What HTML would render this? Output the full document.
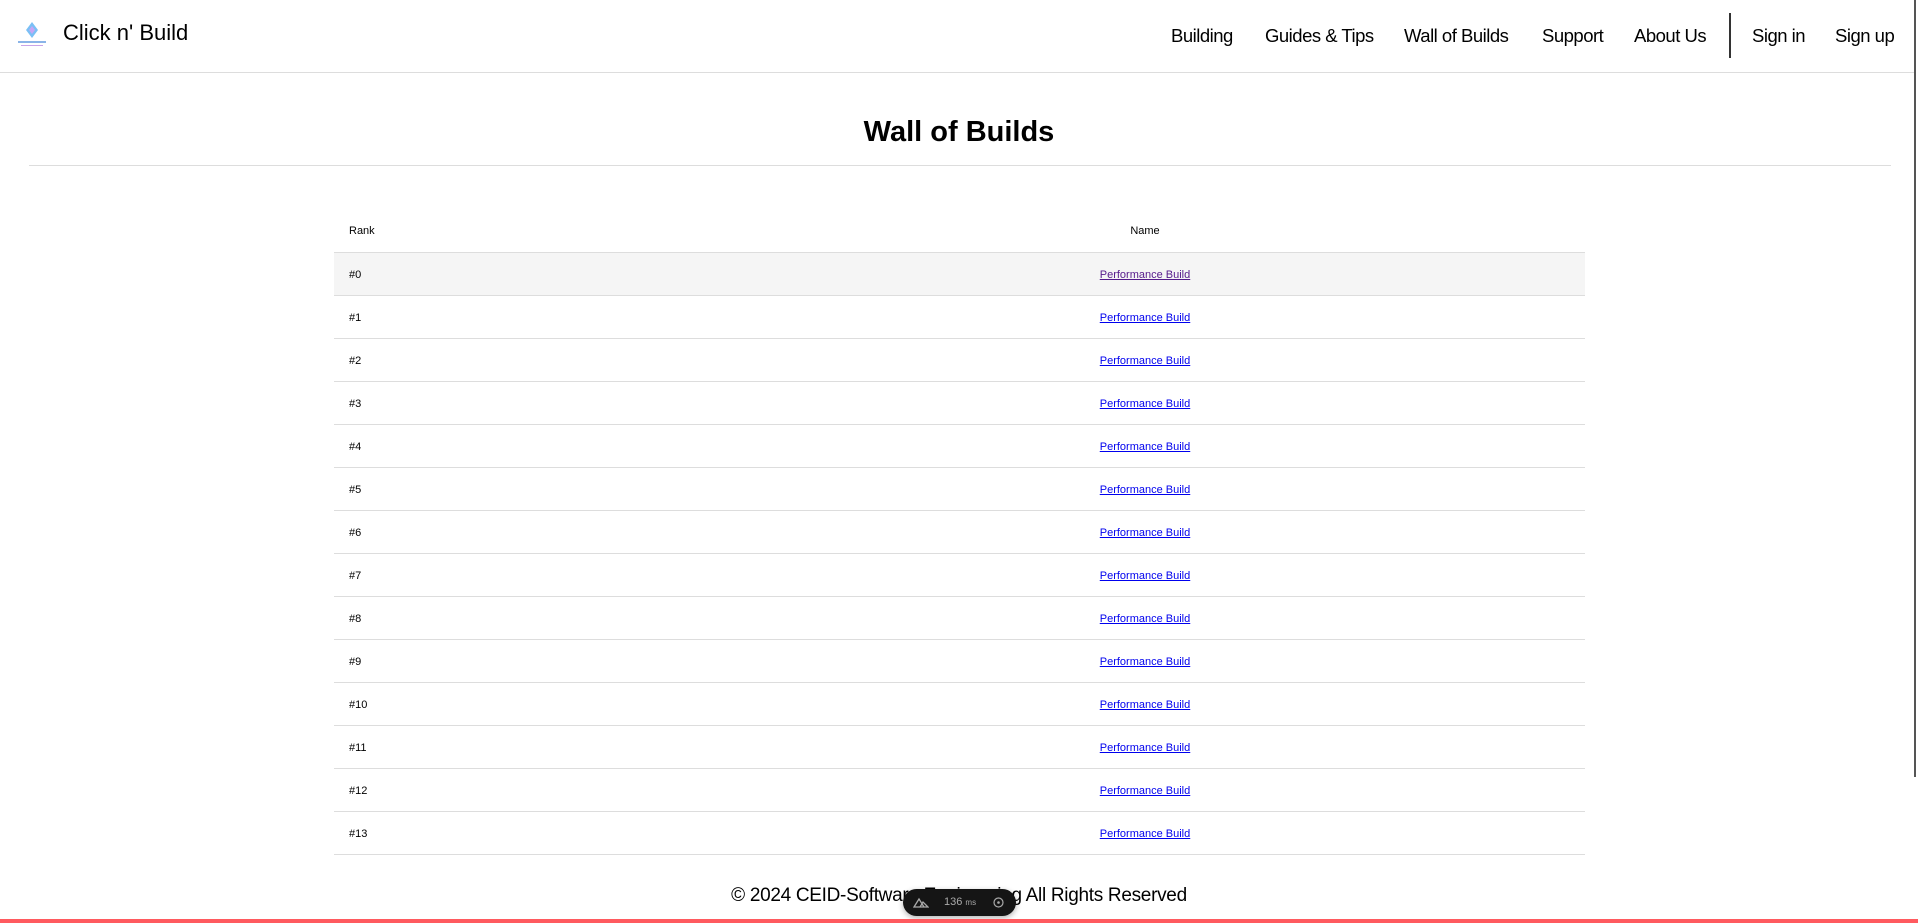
<!DOCTYPE html>
<html><head><meta charset="utf-8"><style>
*{margin:0;padding:0;box-sizing:border-box}
body{width:1918px;height:923px;overflow:hidden;background:#fff;font-family:"Liberation Sans",Roboto,sans-serif;color:#000;position:relative}
.hdr{position:absolute;left:0;top:0;width:1914px;height:73px;border-bottom:1px solid #ddd}
.logo{position:absolute;left:15px;top:20px;width:34px;height:30px}
.brand{position:absolute;left:63px;top:20px;font-size:22px}
.nav{position:absolute;top:25px;font-size:18.5px;letter-spacing:-0.5px}
.sep{position:absolute;left:1729px;top:13px;width:2px;height:45px;background:#333}
h1{position:absolute;left:0;width:1918px;top:116px;text-align:center;font-size:29px;font-weight:bold}
.hr{position:absolute;left:29px;width:1862px;top:165px;height:1px;background:#ddd}
table{position:absolute;left:334px;top:209px;width:1251px;border-collapse:collapse;font-size:11px}
td,th{height:43px;border-bottom:1px solid #ddd;padding:2px 15px 0}
th{font-weight:normal}
td:first-child,th:first-child{width:371px;text-align:left}
td:last-child,th:last-child{text-align:center}
tr.f td{background:#f5f5f5}
a{color:#00e;text-decoration:underline}
a.v{color:#551a8b}
.foot{position:absolute;left:0;width:1918px;top:885px;text-align:center;font-size:19px;letter-spacing:-0.3px}
.red{position:absolute;left:0;bottom:0;width:1918px;height:4px;background:#ff5a5f}
.sb{position:absolute;right:2px;top:0;width:2px;height:777px;background:#555}
.pill{position:absolute;left:903px;top:889px;width:113px;height:27px;background:#151515;border-radius:14px;color:#aaa;font-size:11px;box-shadow:0 2px 6px rgba(0,0,0,.3)}
</style></head><body>
<div class="hdr">
<svg class="logo" viewBox="0 0 34 30"><path d="M17 2 L23 10 L17 18 L11 10Z" fill="#7ac0f5"/><path d="M17 6 L20 10 L17 14 L14 10Z" fill="#c7a6f5"/><rect x="3" y="21" width="28" height="2" fill="#8ab4e8"/><rect x="6" y="25" width="22" height="1" fill="#c9a4e8"/></svg>
<div class="brand">Click n' Build</div>
<div class="nav" style="left:1171px">Building</div>
<div class="nav" style="left:1265px">Guides &amp; Tips</div>
<div class="nav" style="left:1404px">Wall of Builds</div>
<div class="nav" style="left:1542px">Support</div>
<div class="nav" style="left:1634px">About Us</div>
<div class="sep"></div>
<div class="nav" style="left:1752px">Sign in</div>
<div class="nav" style="left:1835px">Sign up</div>
</div>
<div class="sb"></div>
<h1>Wall of Builds</h1>
<div class="hr"></div>
<table>
<tr><th>Rank</th><th>Name</th></tr>
<tr class="f"><td>#0</td><td><a class="v">Performance Build</a></td></tr>
<tr><td>#1</td><td><a>Performance Build</a></td></tr>
<tr><td>#2</td><td><a>Performance Build</a></td></tr>
<tr><td>#3</td><td><a>Performance Build</a></td></tr>
<tr><td>#4</td><td><a>Performance Build</a></td></tr>
<tr><td>#5</td><td><a>Performance Build</a></td></tr>
<tr><td>#6</td><td><a>Performance Build</a></td></tr>
<tr><td>#7</td><td><a>Performance Build</a></td></tr>
<tr><td>#8</td><td><a>Performance Build</a></td></tr>
<tr><td>#9</td><td><a>Performance Build</a></td></tr>
<tr><td>#10</td><td><a>Performance Build</a></td></tr>
<tr><td>#11</td><td><a>Performance Build</a></td></tr>
<tr><td>#12</td><td><a>Performance Build</a></td></tr>
<tr><td>#13</td><td><a>Performance Build</a></td></tr>
</table>
<div class="foot">© 2024 CEID-Software Engineering All Rights Reserved</div>
<div class="pill"><svg style="position:absolute;left:10px;top:7px" width="16" height="12" viewBox="0 0 16 12"><path d="M1 11 L6 3 L11 11Z M7 11 L10 6 L15 11Z" fill="none" stroke="#aaa" stroke-width="1.3"/></svg><span style="position:absolute;left:41px;top:7px">136 <small style="font-size:8px">ms</small></span><svg style="position:absolute;left:89px;top:7px" width="13" height="13" viewBox="0 0 13 13"><circle cx="6.5" cy="6.5" r="4.5" fill="none" stroke="#aaa" stroke-width="1.2"/><circle cx="6.5" cy="6.5" r="1.3" fill="#aaa"/></svg></div>
<div class="red"></div>
</body></html>
